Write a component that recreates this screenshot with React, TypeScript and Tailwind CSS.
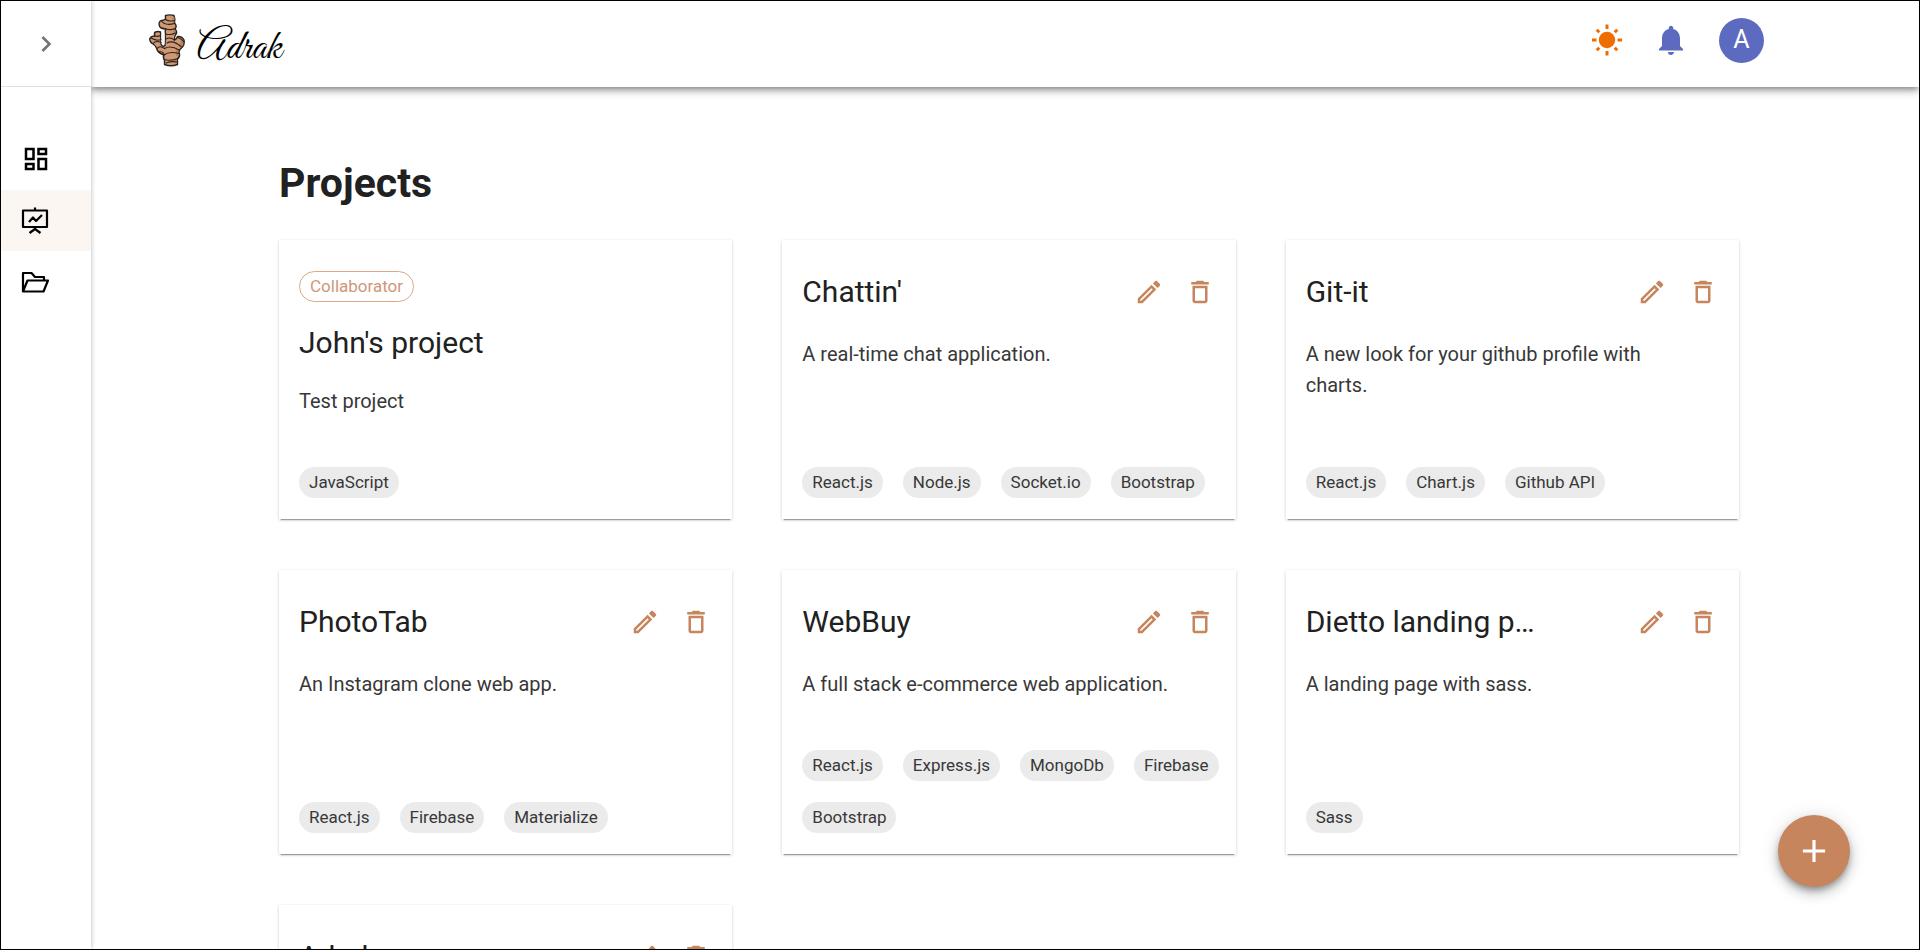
import React from "react";
import {
  MdAdd,
  MdChevronRight,
  MdNotifications,
  MdOutlineDashboard,
} from "react-icons/md";

type Project = {
  name: string;
  description: string;
  tags: string[];
  collaborator?: boolean;
};

const rows: { height: string; projects: Project[] }[] = [
  {
    height: "min-h-[279px]",
    projects: [
      { name: "John's project", description: "Test project", tags: ["JavaScript"], collaborator: true },
      { name: "Chattin'", description: "A real-time chat application.", tags: ["React.js", "Node.js", "Socket.io", "Bootstrap"] },
      { name: "Git-it", description: "A new look for your github profile with charts.", tags: ["React.js", "Chart.js", "Github API"] },
    ],
  },
  {
    height: "min-h-[284px]",
    projects: [
      { name: "PhotoTab", description: "An Instagram clone web app.", tags: ["React.js", "Firebase", "Materialize"] },
      { name: "WebBuy", description: "A full stack e-commerce web application.", tags: ["React.js", "Express.js", "MongoDb", "Firebase", "Bootstrap"] },
      { name: "Dietto landing page", description: "A landing page with sass.", tags: ["Sass"] },
    ],
  },
  {
    height: "min-h-[284px]",
    projects: [{ name: "Adrak", description: "A project management app.", tags: ["React.js", "Firebase"] }],
  },
];

function GingerLogo() {
  return (
    <svg viewBox="0 0 36 53" className="h-[53px] w-9 overflow-visible" aria-hidden="true">
      <path
        d="M16.500 1.500Q21 .300 25 1.500Q26.500 5 25.500 9Q28.500 12 26 15Q29 18 26.500 21Q25 23.500 25.500 26Q28 25 28.500 22.500Q33 22 35 26Q36 31 32.500 34Q29 36.500 30.500 40Q31 43 28.500 45V50.500Q22 53 15.500 50.500V46Q13.500 43 15 41Q8.500 39 7.500 34Q6.500 31.500 4 30Q.500 28 .800 24.500Q2 22 6 22Q4.500 19 6.500 18Q9 17 11.500 18L12 30Q13.500 33.500 16 31.500L16.500 20Q15.500 17 17 15Q11 14.500 10.500 12Q9 7.500 12.500 6.500Q15 6.500 16.500 5Z"
        fill="#cf9873"
        stroke="#2a2421"
        strokeWidth="1.400"
        strokeLinejoin="round"
      />
      <path d="M12.300 20.500V29Q13.500 32 15.700 30V21Z" fill="#f6f1ee" />
      <path d="M24.500 3V8M25 16.500V19.500M33 26Q33.500 30 30.500 32M28 36Q27 38 28.500 42M27 45.500V49.500" fill="none" stroke="#bd7c54" strokeWidth="2" />
      <path
        d="M16.500 5.500Q20 8 25.500 6.500M12.500 7Q16 12 25.500 9.500M17 15Q22 16.500 26 14.500M16.500 20Q22 21.500 26.500 19M17 25Q21 22.500 25.500 26M18 29Q24 25.500 32.500 33M29 23.500Q33 25 35 28M6 22Q9 23 11.500 21.500M2 24Q8 27.500 12 25.500M4 29.500Q7 26 12 28.500M8 34.500Q11 31 15.500 34.500Q22 31 30 36M15 41Q15 38 10.500 37.500M15 41Q20 37 30 39.500M15 45.500Q21 47.500 29 44.500M17 49Q22 47 28.500 48"
        fill="none"
        stroke="#2a2421"
        strokeWidth="1.100"
        strokeLinecap="round"
      />
    </svg>
  );
}

function SunIcon() {
  return (
    <svg viewBox="0 0 32 32" className="size-8" aria-hidden="true">
      <circle cx="16" cy="16" r="8.200" fill="#ef6c00" />
      <path
        d="M16 .500V5M16 27v4.500M1 16h4.500M26.500 16H31M5.700 5.700l2.600 2.600M23.700 23.700l2.600 2.600M26.300 5.700l-2.600 2.600M8.300 23.700l-2.600 2.600"
        stroke="#ef6c00"
        strokeWidth="3"
      />
    </svg>
  );
}

function PresentationIcon() {
  return (
    <svg viewBox="0 0 28 28" className="size-7" fill="none" stroke="currentColor" strokeWidth="2.200" strokeLinejoin="round" aria-hidden="true">
      <path d="M2 3.500h24V20H2zM14 .500v3M14 20v2M8.500 26l5.500-4 5.500 4M8 15l4-4.500 3 3.500 6-6" />
    </svg>
  );
}

function FolderIcon() {
  return (
    <svg viewBox="0 0 28 28" className="size-7" fill="none" stroke="currentColor" strokeWidth="2.200" strokeLinejoin="round" aria-hidden="true">
      <path d="M2 23.500V5h8.500l3.500 4h9v3.500M2 23.500h20.500L27 12.500H6.500z" />
    </svg>
  );
}

function PencilIcon() {
  return (
    <svg viewBox="0 0 24 24" className="size-[30px]" fill="currentColor" aria-hidden="true">
      <path d="m14.060 9.020.92.920L5.920 19H5v-.92l9.060-9.060M17.660 3c-.25 0-.51.1-.7.290l-1.830 1.830 3.750 3.750 1.830-1.830c.39-.39.39-1.020 0-1.410l-2.340-2.340c-.2-.2-.45-.29-.71-.29zm-3.600 3.190L3 17.250V21h3.750L17.810 9.940l-3.750-3.750z" />
    </svg>
  );
}

function TrashIcon() {
  return (
    <svg viewBox="0 0 24 24" className="size-[30px]" fill="currentColor" aria-hidden="true">
      <path d="M6 19c0 1.100.9 2 2 2h8c1.100 0 2-.9 2-2V7H6v12zM8 9h8v10H8V9zm7.500-5-1-1h-5l-1 1H5v2h14V4h-3.500z" />
    </svg>
  );
}

function ProjectCard({ project, height }: { project: Project; height: string }) {
  return (
    <article
      className={`${height} flex min-w-0 flex-col bg-white px-5 pb-[21px] shadow-[0_3px_1px_-2px_rgba(0,0,0,0.3),0_1px_3px_rgba(0,0,0,0.2)] ${project.collaborator ? "pt-[31px]" : "pt-[25px]"}`}
    >
      {project.collaborator ? (
        <div className="flex flex-col items-start">
          <span className="flex h-[31px] items-center rounded-full border border-[#dba888] px-[10px] text-[17px] text-[#cf967a]">
            Collaborator
          </span>
          <h2 className="mt-5 text-[30px] leading-[42px]">{project.name}</h2>
          <p className="mt-[22px] text-xl leading-[31px] text-[#383838]">{project.description}</p>
        </div>
      ) : (
        <>
          <div className="flex items-center justify-between">
            <h2 className="w-[240px] truncate text-[30px] leading-[54px]">{project.name}</h2>
            <div className="flex gap-[21px] pr-px text-[#c6855c]">
              <button type="button" aria-label={`Edit ${project.name}`}>
                <PencilIcon />
              </button>
              <button type="button" aria-label={`Delete ${project.name}`}>
                <TrashIcon />
              </button>
            </div>
          </div>
          <p className="mt-5 pr-8 text-xl leading-[31px] text-[#383838]">{project.description}</p>
        </>
      )}
      <ul className="-mr-3 mt-auto flex flex-wrap gap-x-5 gap-y-[21px] pt-5">
        {project.tags.map((tag) => (
          <li key={tag} className="flex h-[31px] items-center rounded-full bg-[#ebebeb] px-[10px] text-[17px] text-[#383838]">
            {tag}
          </li>
        ))}
      </ul>
    </article>
  );
}

export default function App() {
  return (
    <div className="flex h-screen overflow-hidden border border-black bg-white font-[Roboto,sans-serif] text-[#212121]">
      <aside className="z-20 flex w-[90px] shrink-0 flex-col bg-white shadow-[1px_0_4px_rgba(0,0,0,0.2)]">
        <div className="flex h-[86px] items-center justify-center border-b border-[#e0e0e0]">
          <button type="button" aria-label="Expand menu" className="text-[#757575]">
            <MdChevronRight size={32} />
          </button>
        </div>
        <nav className="mt-[41px] flex flex-col text-black">
          <a href="#dashboard" aria-label="Dashboard" className="flex h-[62px] items-center pl-5">
            <MdOutlineDashboard size={30} />
          </a>
          <a href="#projects" aria-label="Projects" aria-current="page" className="flex h-[61px] items-center bg-[#fbf6f2] pl-5">
            <PresentationIcon />
          </a>
          <a href="#files" aria-label="Files" className="flex h-[62px] items-center pl-5">
            <FolderIcon />
          </a>
        </nav>
      </aside>
      <div className="flex min-w-0 flex-1 flex-col">
        <header className="z-10 flex h-[86px] shrink-0 items-center justify-between bg-white pb-2 pl-[58px] pr-[155px] shadow-[0_3px_5px_-1px_rgba(0,0,0,0.3),0_5px_8px_rgba(0,0,0,0.16),0_1px_12px_rgba(0,0,0,0.12)]">
          <a href="#home" className="flex items-center gap-3">
            <GingerLogo />
            <span className="pt-4 font-['Great_Vibes','Alex_Brush','Liberation_Serif',cursive] text-[41px] leading-none text-black">Adrak</span>
          </a>
          <div className="flex items-center">
            <button type="button" aria-label="Toggle theme">
              <SunIcon />
            </button>
            <button type="button" aria-label="Notifications" className="ml-[30px] text-[#5c6bc0]">
              <MdNotifications size={36} />
            </button>
            <button type="button" aria-label="Account" className="ml-[30px] flex size-[45px] items-center justify-center rounded-full bg-[#5c6bc0] text-[25px] text-white">
              A
            </button>
          </div>
        </header>
        <main className="flex-1 overflow-y-auto pb-12 pl-[188px] pr-[180px] pt-[66px] [scrollbar-width:none]">
          <h1 className="text-[41px] font-bold leading-[60px]">Projects</h1>
          <div className="mt-[27px] flex flex-col gap-[51px]">
            {rows.map((row) => (
              <section key={row.projects[0].name} className="grid grid-cols-3 gap-[50px]">
                {row.projects.map((project) => (
                  <ProjectCard key={project.name} project={project} height={row.height} />
                ))}
              </section>
            ))}
          </div>
        </main>
      </div>
      <button
        type="button"
        aria-label="Add project"
        className="fixed bottom-[63px] right-[70px] z-30 flex size-[72px] items-center justify-center rounded-full bg-[#c6855c] text-white shadow-[0_4px_6px_-1px_rgba(0,0,0,0.3),0_7px_14px_rgba(0,0,0,0.18),0_1px_20px_rgba(0,0,0,0.12)]"
      >
        <MdAdd size={38} />
      </button>
    </div>
  );
}
